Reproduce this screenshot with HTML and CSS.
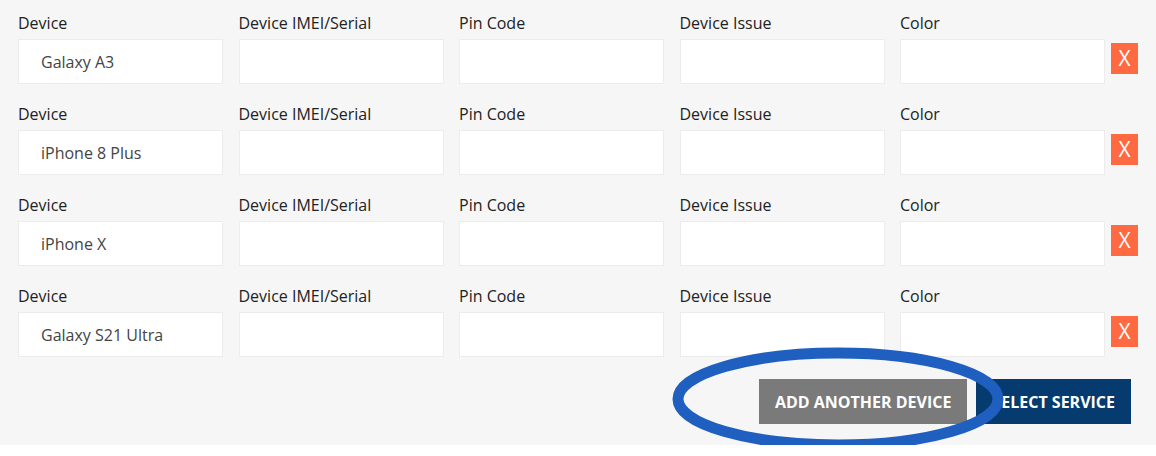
FILE: index.html
```html
<!DOCTYPE html>
<html lang="en">
<head>
    <meta charset="UTF-8">
    <title>Devices</title>
    <link rel="stylesheet" href="styles.css">
</head>
<body>
    <div class="device-panel">
        <div class="device-row">
            <div class="field"><label>Device</label><input type="text" value="Galaxy A3"></div>
            <div class="field"><label>Device IMEI/Serial</label><input type="text"></div>
            <div class="field"><label>Pin Code</label><input type="text"></div>
            <div class="field"><label>Device Issue</label><input type="text"></div>
            <div class="field"><label>Color</label><input type="text"></div>
            <button class="remove-btn">X</button>
        </div>
        <div class="device-row">
            <div class="field"><label>Device</label><input type="text" value="iPhone 8 Plus"></div>
            <div class="field"><label>Device IMEI/Serial</label><input type="text"></div>
            <div class="field"><label>Pin Code</label><input type="text"></div>
            <div class="field"><label>Device Issue</label><input type="text"></div>
            <div class="field"><label>Color</label><input type="text"></div>
            <button class="remove-btn">X</button>
        </div>
        <div class="device-row">
            <div class="field"><label>Device</label><input type="text" value="iPhone X"></div>
            <div class="field"><label>Device IMEI/Serial</label><input type="text"></div>
            <div class="field"><label>Pin Code</label><input type="text"></div>
            <div class="field"><label>Device Issue</label><input type="text"></div>
            <div class="field"><label>Color</label><input type="text"></div>
            <button class="remove-btn">X</button>
        </div>
        <div class="device-row">
            <div class="field"><label>Device</label><input type="text" value="Galaxy S21 Ultra"></div>
            <div class="field"><label>Device IMEI/Serial</label><input type="text"></div>
            <div class="field"><label>Pin Code</label><input type="text"></div>
            <div class="field"><label>Device Issue</label><input type="text"></div>
            <div class="field"><label>Color</label><input type="text"></div>
            <button class="remove-btn">X</button>
        </div>

        <div class="actions">
            <button class="btn btn-add">ADD ANOTHER DEVICE</button>
            <button class="btn btn-select">SELECT SERVICE</button>
        </div>

        <!-- annotation circle -->
        <svg class="highlight" width="340" height="110" viewBox="0 0 340 110">
            <ellipse cx="170" cy="53" rx="160" ry="46" fill="none" stroke="#1f5fbf" stroke-width="11"/>
        </svg>
    </div>
</body>
</html>
```

FILE: styles.css
```css
body {
    margin: 0;
    font-family: "Open Sans", "Liberation Sans", sans-serif;
    background-color: #fff;
    color: #222;
}
.device-panel {
    position: relative;
    background-color: #f6f6f6;
    padding: 12px 25px 21px 18px;
}
.device-row {
    display: flex;
    align-items: flex-start;
    margin-bottom: 19px;
}
.field {
    flex: 0 0 205px;
    margin-right: 15.5px;
}
.field:nth-child(5) {
    margin-right: 6px;
}
.field label {
    display: block;
    font-size: 16px;
    line-height: 22px;
    margin-bottom: 5px;
    color: #222;
}
.field input {
    display: block;
    width: 100%;
    height: 45px;
    box-sizing: border-box;
    border: 1px solid #ececec;
    background-color: #fff;
    padding: 0 22px;
    font-family: inherit;
    font-size: 16px;
    color: #444;
    outline: none;
}
.remove-btn {
    flex: 0 0 27px;
    margin-top: 31px;
    height: 31px;
    padding: 0;
    border: none;
    background-color: #ff6a42;
    color: #fff;
    font-family: inherit;
    font-size: 21px;
    line-height: 31px;
    cursor: pointer;
}
.actions {
    display: flex;
    justify-content: flex-end;
    gap: 9px;
    margin-top: 22px;
}
.btn {
    height: 45px;
    padding: 0 16px;
    border: none;
    color: #fff;
    font-family: inherit;
    font-size: 16px;
    font-weight: 700;
    cursor: pointer;
}
.btn-add {
    background-color: #7a7a7a;
}
.btn-select {
    background-color: #053b6f;
}
.highlight {
    position: absolute;
    left: 668px;
    top: 346px;
    overflow: visible;
}
```
